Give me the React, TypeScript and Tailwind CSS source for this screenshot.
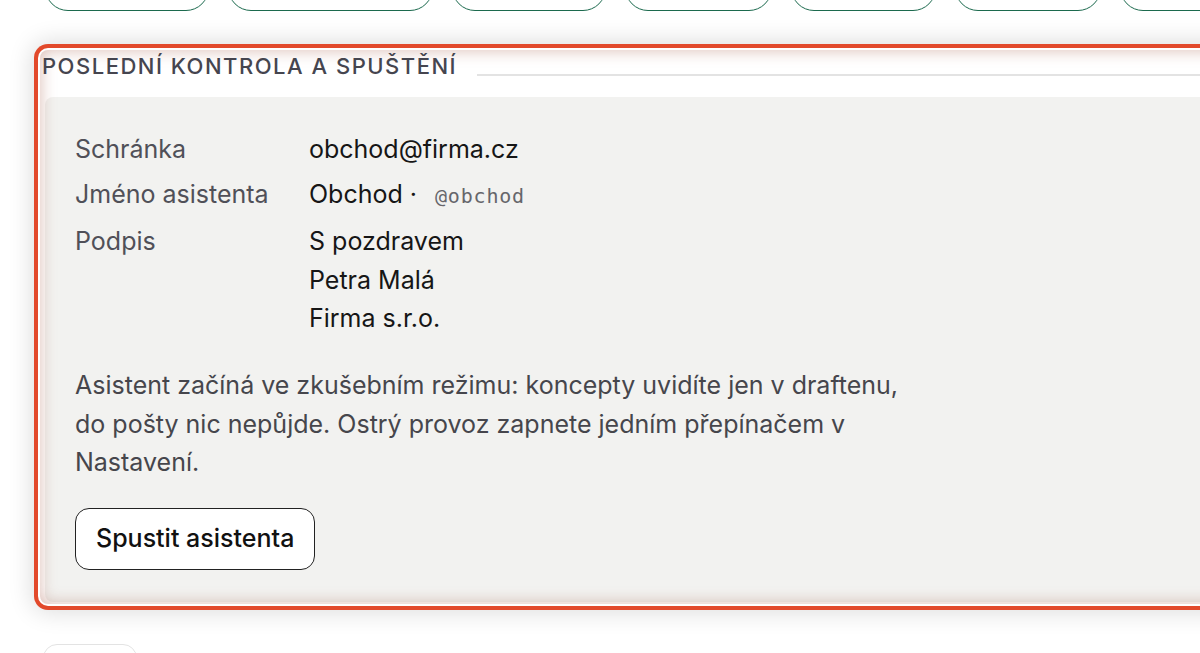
export default function App() {
  return (
    <div className="h-[653px] w-[1200px] overflow-hidden bg-white font-['Inter',sans-serif] text-[25px]">
      <div className="-mt-[35px] flex h-[46px] gap-[19px] pl-[45px]">
        <button className="h-[46px] w-[164px] shrink-0 rounded-full border-[1.5px] border-[#1c6a4e] bg-white" />
        <button className="h-[46px] w-[205px] shrink-0 rounded-full border-[1.5px] border-[#1c6a4e] bg-white" />
        <button className="h-[46px] w-[154px] shrink-0 rounded-full border-[1.5px] border-[#1c6a4e] bg-white" />
        <button className="h-[46px] w-[147px] shrink-0 rounded-full border-[1.5px] border-[#1c6a4e] bg-white" />
        <button className="h-[46px] w-[145px] shrink-0 rounded-full border-[1.5px] border-[#1c6a4e] bg-white" />
        <button className="h-[46px] w-[146px] shrink-0 rounded-full border-[1.5px] border-[#1c6a4e] bg-white" />
        <button className="h-[46px] w-[160px] shrink-0 rounded-full border-[1.5px] border-[#1c6a4e] bg-white" />
      </div>

      <section className="ml-[40px] mt-[38.5px] w-[1200px] rounded-[8px] bg-white pb-[2px] shadow-[0_0_0_2px_#fff,0_0_0_6px_#e2492b,0_0_24px_8px_rgba(0,0,0,0.14),inset_0_0_16px_rgba(150,60,40,0.36)]">
        <div className="flex items-end pl-[2px] pt-[3.2px]">
          <h2 className="text-[22px] font-medium leading-[26px] tracking-[1.5px] text-[#45454f]">
            POSLEDNÍ KONTROLA A SPUŠTĚNÍ
          </h2>
          <div className="mb-[3px] ml-[20px] h-[2px] flex-1 bg-[#e3e3e3]" />
        </div>

        <div className="ml-[5px] mt-[18.5px] rounded-[8px] bg-[rgba(40,40,0,0.06)] pb-[32px] pl-[30px] pt-[33px]">
          <dl className="grid grid-cols-[234px_1fr] gap-y-[6.5px] leading-[38.5px]">
            <dt className="text-[#505058]">Schránka</dt>
            <dd className="text-[#161616]">obchod@firma.cz</dd>
            <dt className="text-[#505058]">Jméno asistenta</dt>
            <dd className="text-[#161616]">
              Obchod ·
              <span className="ml-[18px] font-['DejaVu_Sans_Mono',monospace] text-[20px] tracking-[0.8px] text-[#66666b]">
                @obchod
              </span>
            </dd>
            <dt className="text-[#505058]">Podpis</dt>
            <dd className="text-[#161616]">
              <div>S pozdravem</div>
              <div>Petra Malá</div>
              <div>Firma s.r.o.</div>
            </dd>
          </dl>

          <p className="mt-[28.5px] max-w-[850px] leading-[38.5px] text-[#46464c]">
            Asistent začíná ve zkušebním režimu: koncepty uvidíte jen v draftenu, do pošty nic nepůjde. Ostrý provoz
            zapnete jedním přepínačem v Nastavení.
          </p>

          <button className="mt-[26px] h-[62px] rounded-[14px] border-[1.5px] border-[#222] bg-white px-[20px] text-[25px] font-medium text-[#111]">
            Spustit asistenta
          </button>
        </div>
      </section>

      <div className="ml-[43px] mt-[40px] h-[40px] w-[94px] rounded-[14px] border-[1.5px] border-[#e3e3e3] bg-white" />
    </div>
  );
}
